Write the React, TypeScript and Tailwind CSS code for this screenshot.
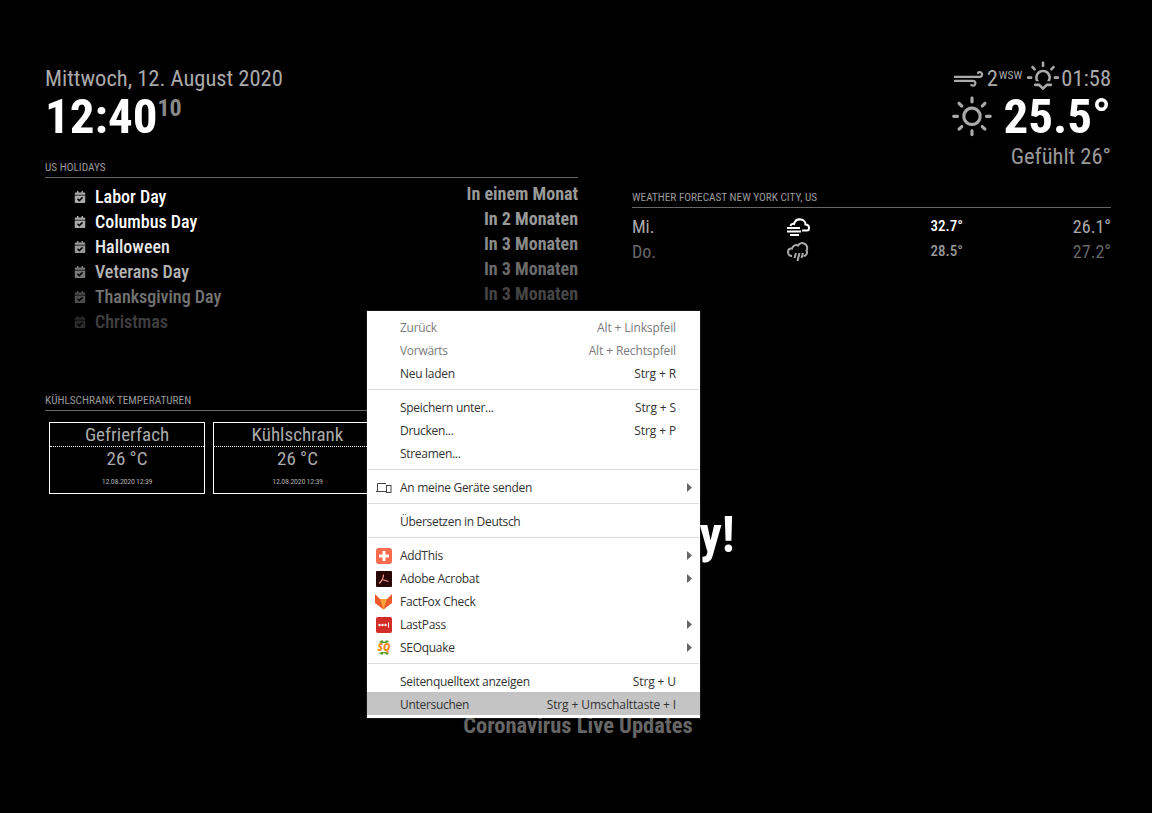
import React from 'react'
import { FaCalendarCheck } from 'react-icons/fa'
import { WiDaySunny, WiStrongWind, WiSunset } from 'react-icons/wi'

const holidays = [
  { name: 'Labor Day', when: 'In einem Monat', fade: 'opacity-100' },
  { name: 'Columbus Day', when: 'In 2 Monaten', fade: 'opacity-100' },
  { name: 'Halloween', when: 'In 3 Monaten', fade: 'opacity-90' },
  { name: 'Veterans Day', when: 'In 3 Monaten', fade: 'opacity-70' },
  { name: 'Thanksgiving Day', when: 'In 3 Monaten', fade: 'opacity-45' },
  { name: 'Christmas', when: '', fade: 'opacity-25' },
]

const Header = ({ children }: { children: React.ReactNode }) => (
  <div className="border-b border-[#666] pb-[2px] text-[11.250px] leading-[15px] text-[#999]">{children}</div>
)

const FridgeCard = ({ title, width }: { title: string; width: string }) => (
  <div className={`h-[72px] ${width} border border-white text-center`}>
    <div className="h-[24px] border-b border-dotted border-white text-[19px] leading-[23px] text-[#aaa]">{title}</div>
    <div className="text-[19px] leading-[24px] text-[#aaa]">26 °C</div>
    <div className="mt-[6px] text-[8px] leading-[10px] tracking-[-0.3px] text-[#aaa]">12.08.2020 12:39</div>
  </div>
)

const Row = ({ label, keys, dim, arrow, icon, active }: { label: string; keys?: string; dim?: boolean; arrow?: boolean; icon?: React.ReactNode; active?: boolean }) => (
  <div className={`relative flex h-[23px] items-center pl-[33px] pr-[24px] ${active ? '-mt-[1px] bg-[#c4c4c4] pt-[2px]' : ''} ${dim ? 'text-[#7b7b7b]' : 'text-[#333]'}`}>
    {icon && <span className="absolute left-[8px] top-[3px] flex h-[17px] w-[17px] items-center justify-center">{icon}</span>}
    <span className="tracking-[-0.3px]">{label}</span>
    {keys && <span className="ml-auto tracking-[-0.12px]">{keys}</span>}
    {arrow && (
      <svg className="absolute right-[8px] top-[7px]" width="5" height="9" viewBox="0 0 5 9">
        <path d="M0 0L5 4.500L0 9Z" fill="#666" />
      </svg>
    )}
  </div>
)

const Sep = () => <div className="mx-[1px] mb-[6px] mt-[4px] h-[1px] bg-[#dcdcdc]" />

const ContextMenu = () => (
  <div className="absolute left-[367px] top-[311px] w-[333px] bg-white pb-[3px] pt-[5px] font-['Open_Sans',sans-serif] text-[12px] [font-stretch:100%] shadow-[0_0_1px_#888]">
    <Row label="Zurück" keys="Alt + Linkspfeil" dim />
    <Row label="Vorwärts" keys="Alt + Rechtspfeil" dim />
    <Row label="Neu laden" keys="Strg + R" />
    <Sep />
    <Row label="Speichern unter..." keys="Strg + S" />
    <Row label="Drucken..." keys="Strg + P" />
    <Row label="Streamen..." />
    <Sep />
    <Row
      label="An meine Geräte senden"
      arrow
      icon={
        <svg width="16" height="10" viewBox="0 0 16 10" fill="none" stroke="#444">
          <path d="M1.500 8V0.500H10M0 8.500H10" />
          <rect x="10.500" y="2.500" width="4.500" height="7" />
        </svg>
      }
    />
    <Sep />
    <Row label="Übersetzen in Deutsch" />
    <Sep />
    <Row
      label="AddThis"
      arrow
      icon={
        <svg width="16" height="16" viewBox="0 0 16 16">
          <rect width="16" height="16" rx="3" fill="#f8694d" />
          <path d="M6.500 3h3v3.500H13v3H9.500V13h-3V9.500H3v-3h3.500Z" fill="#fff" />
        </svg>
      }
    />
    <Row
      label="Adobe Acrobat"
      arrow
      icon={
        <svg width="16" height="16" viewBox="0 0 16 16">
          <rect width="16" height="16" rx="1" fill="#2a0505" />
          <path d="M3 12.500C6 10 7.500 6 7.500 3.500M6 8.500L12.500 10.500" fill="none" stroke="#ee9a90" strokeWidth="1.200" />
        </svg>
      }
    />
    <Row
      label="FactFox Check"
      icon={
        <svg width="17" height="17" viewBox="0 0 17 17">
          <path d="M0 1L5 6H12L17 1V10L8.500 16.500L0 10Z" fill="#ef5a2a" />
          <path d="M5 6H12L8.500 16.500Z" fill="#f9a13a" />
        </svg>
      }
    />
    <Row
      label="LastPass"
      arrow
      icon={
        <svg width="16" height="16" viewBox="0 0 16 16">
          <rect width="16" height="16" rx="2" fill="#d32d27" />
          <circle cx="3.500" cy="8" r="1.200" fill="#fff" />
          <circle cx="6.500" cy="8" r="1.200" fill="#fff" />
          <circle cx="9.500" cy="8" r="1.200" fill="#fff" />
          <rect x="12" y="5.500" width="1" height="5" fill="#fff" />
        </svg>
      }
    />
    <Row
      label="SEOquake"
      arrow
      icon={
        <svg width="16" height="17" viewBox="0 0 16 17">
          <path d="M3 3L6 1L8 3L11 1L13 3L10 4H5ZM3 14L6 16L8 14L11 16L13 14L10 13H5Z" fill="#5aa02c" />
          <text x="8" y="12" textAnchor="middle" fontSize="10" fontWeight="800" fontStyle="italic" fill="#f08a1d" fontFamily="'Open Sans',sans-serif">SQ</text>
        </svg>
      }
    />
    <Sep />
    <Row label="Seitenquelltext anzeigen" keys="Strg + U" />
    <Row label="Untersuchen" keys="Strg + Umschalttaste + I" active />
  </div>
)

const FogIcon = () => (
  <svg width="24" height="18" viewBox="0 0 24 18" fill="none" stroke="#fff" strokeWidth="2">
    <path d="M4.500 8C5 6 6.500 5.500 8 6C9 2.500 12 1 15 1.500C18 2 19.500 4.500 19.500 6.500C21.500 6.500 23 8 23 10C23 11.500 22 12.500 21 12.500H16" />
    <path d="M1 10H14M1 13.500H15M4 17H13" />
  </svg>
)

const ShowerIcon = () => (
  <svg width="22" height="20" viewBox="0 0 22 20" fill="none" stroke="#aaa" strokeWidth="2">
    <path d="M5 14C2.500 14 1 12 1 10C1 7.500 3 6 5 6.500C6 3 9 2.500 11 3.500C12 1.500 15 0.500 17 1.500C20 2.500 21 6 19.500 8.500C21 11 19 14 16.500 14" />
    <path d="M9 11L7.500 16M12.500 11L10.500 19M16 11L14.500 16" />
  </svg>
)

export default function App() {
  return (
    <div className="relative h-[813px] w-[1152px] overflow-hidden bg-black font-['Roboto',sans-serif] [font-stretch:75%]">
      <div className="flex justify-between pl-[45px] pr-[41px] pt-[65px]">
        <div className="w-[533px]">
          <div className="text-[22.500px] leading-[27px] text-[#aaa]">Mittwoch, 12. August 2020</div>
          <div className="flex items-start text-[49px] font-bold leading-[50px] text-white">
            12:40
            <span className="text-[24px] font-bold leading-[32px] text-[#888]">10</span>
          </div>
          <div className="mt-[18px]">
            <Header>US HOLIDAYS</Header>
          </div>
          <div className="mt-[6px]">
            {holidays.map((h) => (
              <div key={h.name} className={`flex h-[25px] items-center ${h.fade}`}>
                <FaCalendarCheck className="ml-[29px] mr-[9px] text-[12px] text-[#aaa]" />
                <span className="text-[18px] font-medium text-white">{h.name}</span>
                <span className="mb-[6px] ml-auto text-[18px] font-bold text-[#999]">{h.when}</span>
              </div>
            ))}
          </div>
          <div className="mt-[59px]">
            <Header>KÜHLSCHRANK TEMPERATUREN</Header>
          </div>
          <div className="ml-[4px] mt-[11px] flex gap-[8px]">
            <FridgeCard title="Gefrierfach" width="w-[156px]" />
            <FridgeCard title="Kühlschrank" width="w-[169px]" />
          </div>
        </div>
        <div className="w-[479px]">
          <div className="flex h-[27px] items-center justify-end text-[22.500px] leading-[27px] text-[#aaa]">
            <WiStrongWind className="-mr-[2px] text-[37px]" />
            <span className="ml-[2px]">2</span>
            <span className="mb-[8px] ml-[1px] mr-[1px] text-[11.500px] leading-[12px]">WSW</span>
            <WiSunset className="-mr-[2px] -mt-[4px] text-[40px]" />
            <span>01:58</span>
          </div>
          <div className="flex h-[50px] items-center justify-end text-[49px] font-bold leading-[50px] text-white">
            <WiDaySunny className="mr-[3px] text-[56px] text-[#aaa]" />
            25.5°
          </div>
          <div className="mt-[1px] text-right text-[22.500px] leading-[27px] text-[#999]">Gefühlt 26°</div>
          <div className="mt-[20px]">
            <Header>WEATHER FORECAST NEW YORK CITY, US</Header>
          </div>
          <div className="mt-[6px] grid grid-cols-[150px_32px_149px_148px] auto-rows-[25px] items-center text-[18px] leading-[25px] text-[#aaa]">
            <div>Mi.</div>
            <div className="flex justify-center"><FogIcon /></div>
            <div className="text-right text-[15px] font-medium text-white">32.7°</div>
            <div className="text-right">26.1°</div>
            <div className="text-[#666]">Do.</div>
            <div className="flex justify-center"><ShowerIcon /></div>
            <div className="text-right text-[15px] font-medium text-[#999]">28.5°</div>
            <div className="text-right text-[#666]">27.2°</div>
          </div>
        </div>
      </div>
      <div className="absolute inset-x-0 top-[497px] flex flex-col items-center">
        <div className="pr-[8px] text-[50px] font-bold leading-[76px] text-white">Have a nice day!</div>
        <div className="mt-[137px] pl-[4px] text-[22.500px] font-bold leading-[30px] text-[#666]">Coronavirus Live Updates</div>
      </div>
      <ContextMenu />
    </div>
  )
}
